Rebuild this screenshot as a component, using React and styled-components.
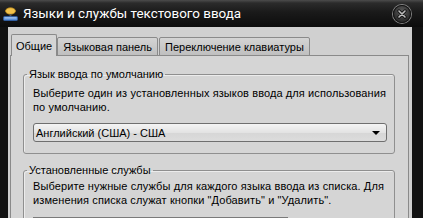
import styled, { createGlobalStyle } from "styled-components";

const GlobalStyle = createGlobalStyle`
  html, body {
    margin: 0;
    padding: 0;
    background: #0d0d0d;
    overflow: hidden;
  }
`;

const Window = styled.div`
  width: 423px;
  height: 218px;
  display: flex;
  flex-direction: column;
  background: #121212;
  overflow: hidden;
  font-family: "Liberation Sans", Arial, sans-serif;
`;

const TitleBar = styled.div`
  height: 27px;
  flex: none;
  display: flex;
  align-items: center;
  gap: 4px;
  padding: 0 12px 0 2px;
  background: linear-gradient(#4c4c4c 0, #2b2b2b 3px, #1a1a1a 12px, #0c0c0c 100%);
`;

const Title = styled.div`
  flex: 1;
  color: #fff;
  font-family: Roboto, "Noto Sans", sans-serif;
  font-size: 13.4px;
  white-space: nowrap;
`;

const CloseButton = styled.div`
  width: 18px;
  height: 18px;
  border-radius: 50%;
  display: flex;
  align-items: center;
  justify-content: center;
  background: radial-gradient(circle at 50% 35%, #5a5a5a 0, #333 55%, #1a1a1a 100%);
  box-shadow: 0 0 0 1px #858585, inset 0 0 0 1px #111;
`;

const Frame = styled.div`
  flex: 1;
  display: flex;
  margin: 0 11px 0 8px;
  padding: 7px 3px 0 2px;
  background: #d0d0d0;
  flex-direction: column;
  min-height: 0;
`;

const Tabs = styled.div`
  display: flex;
  align-items: flex-end;
  gap: 1px;
  padding-left: 2px;
  margin-bottom: -1px;
  position: relative;
  z-index: 1;
`;

const Tab = styled.div`
  height: ${(p) => (p.$active ? "21px" : "17px")};
  margin: ${(p) => (p.$active ? "0 -1px" : "0")};
  padding: 0 ${(p) => (p.$active ? "4px" : "5px")};
  display: flex;
  align-items: center;
  border: 1px solid #8a8a8a;
  border-bottom: ${(p) => (p.$active ? "none" : "1px solid #8a8a8a")};
  border-radius: 2px 2px 0 0;
  background: ${(p) =>
    p.$active ? "#d5d5d5" : "linear-gradient(#d4d4d4, #bfbfbf)"};
  font-size: 11px;
  color: #000;
  white-space: nowrap;
`;

const Panel = styled.div`
  flex: 1;
  border: 1px solid #8a8a8a;
  background: #d5d5d5;
  padding: 11px 13px 0 12px;
  display: flex;
  flex-direction: column;
  gap: 9px;
`;

const Group = styled.fieldset`
  margin: 0;
  padding: ${(p) => p.$pad || "5px 7px 11px 9px"};
  border: 1px solid #8f8f8f;
  border-radius: 3px;
  box-shadow: inset 1px 1px 0 #ececec;
`;

const Legend = styled.legend`
  margin-left: -6px;
  padding: 0 2px;
  font-size: 11px;
  line-height: 14px;
  color: #000;
`;

const Hint = styled.div`
  font-size: 11px;
  line-height: 14px;
  letter-spacing: 0.1px;
  color: #000;
  white-space: nowrap;
`;

const Select = styled.div`
  margin-top: 9px;
  height: 17px;
  display: flex;
  align-items: center;
  padding: 0 6px 0 2px;
  border: 1px solid #6f6f6f;
  border-radius: 3px;
  background: linear-gradient(#f4f4f4, #e3e3e3 50%, #d6d6d6 51%, #dcdcdc);
  font-size: 11px;
  color: #000;
`;

const SelectText = styled.span`
  flex: 1;
`;

const Arrow = styled.span`
  width: 0;
  height: 0;
  border-left: 4px solid transparent;
  border-right: 4px solid transparent;
  border-top: 4px solid #000;
`;

const ListBox = styled.div`
  margin-top: 10px;
  width: 253px;
  height: 20px;
  display: flex;
  justify-content: flex-end;
  border: 1px solid #7a7a7a;
  background: #fff;
`;

const ScrollBar = styled.div`
  width: 12px;
  border-left: 1px solid #9a9a9a;
  background: #4a4a4a;
`;

function AppIcon() {
  return (
    <svg width="17" height="17" viewBox="0 0 17 17">
      <ellipse cx="8.5" cy="6" rx="5" ry="3.2" fill="#f2c14a" stroke="#b98a1c" strokeWidth="0.8" />
      <rect x="7.5" y="9" width="2" height="3" fill="#555" />
      <rect x="1.5" y="11.5" width="14" height="4" rx="1" fill="#5b8fd6" stroke="#2f5fa8" strokeWidth="0.8" />
      <rect x="2.5" y="12.3" width="12" height="1.2" fill="#a9c8f0" />
    </svg>
  );
}

function CloseIcon() {
  return (
    <svg width="10" height="10" viewBox="0 0 10 10">
      <path d="M2 2 L8 8 M8 2 L2 8" stroke="#111" strokeWidth="3.2" strokeLinecap="round" />
      <path d="M2 2 L8 8 M8 2 L2 8" stroke="#bdbdbd" strokeWidth="1.6" strokeLinecap="round" />
    </svg>
  );
}

export default function App() {
  return (
    <>
      <GlobalStyle />
      <Window>
        <TitleBar>
          <AppIcon />
          <Title>Языки и службы текстового ввода</Title>
          <CloseButton>
            <CloseIcon />
          </CloseButton>
        </TitleBar>
        <Frame>
          <Tabs>
            <Tab $active>Общие</Tab>
            <Tab>Языковая панель</Tab>
            <Tab>Переключение клавиатуры</Tab>
          </Tabs>
          <Panel>
            <Group>
              <Legend>Язык ввода по умолчанию</Legend>
              <Hint>
                Выберите один из установленных языков ввода для использования
                <br />
                по умолчанию.
              </Hint>
              <Select>
                <SelectText>Английский (США) - США</SelectText>
                <Arrow />
              </Select>
            </Group>
            <Group $pad="2px 7px 11px 9px">
              <Legend>Установленные службы</Legend>
              <Hint>
                Выберите нужные службы для каждого языка ввода из списка. Для
                <br />
                изменения списка служат кнопки "Добавить" и "Удалить".
              </Hint>
              <ListBox>
                <ScrollBar />
              </ListBox>
            </Group>
          </Panel>
        </Frame>
      </Window>
    </>
  );
}
